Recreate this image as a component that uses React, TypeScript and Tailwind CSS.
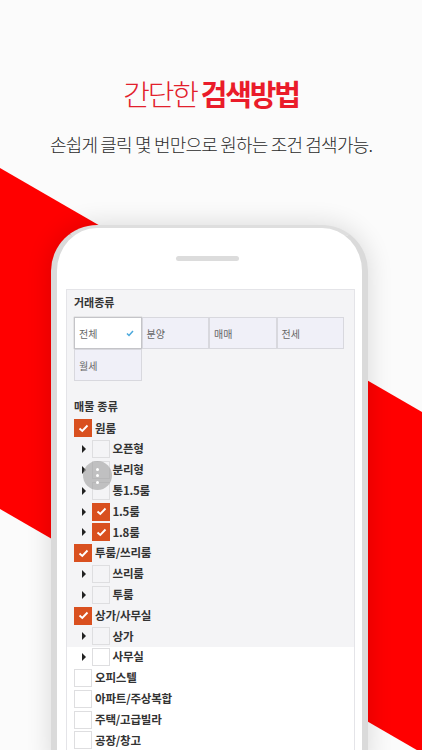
const font = { fontFamily: '"Noto Sans CJK KR", "Noto Sans", sans-serif' };

function Box({ checked }: { checked?: boolean }) {
  return (
    <span
      className={`flex h-[18px] w-[18px] shrink-0 items-center justify-center border ${
        checked ? "border-[#d9501f] bg-[#d9501f]" : "border-[#dedee0]"
      }`}
    >
      {checked && (
        <svg width="11" height="9" viewBox="0 0 11 9" fill="none">
          <path d="M1.5 4.5 L4.3 7 L9.5 1.5" stroke="#fff" strokeWidth="1.9" />
        </svg>
      )}
    </span>
  );
}

function Row({ label, checked, child }: { label: string; checked?: boolean; child?: boolean }) {
  return (
    <div className={`flex h-[20.8px] items-center ${child ? "pl-[7px]" : ""}`}>
      {child && (
        <svg width="4" height="8" viewBox="0 0 4 8" className="mr-[6px] ml-px shrink-0">
          <path d="M0 0 L4 4 L0 8 Z" fill="#222" />
        </svg>
      )}
      <Box checked={checked} />
      <span className={`${child ? "ml-[2.5px]" : "ml-[3px]"} text-[11.5px] leading-none font-bold tracking-[-0.2px] text-[#333]`}>
        {label}
      </span>
    </div>
  );
}

function Tab({ label, active }: { label: string; active?: boolean }) {
  return (
    <div
      className={`flex h-[32px] w-[67.5px] items-center justify-between border px-[4px] text-[10px] text-[#666] ${
        active ? "border-[#c4c4c8] bg-white shadow-[0_0_1px_#999]" : "border-[#d8d8de] bg-[#f0f0f8]"
      }`}
    >
      <span>{label}</span>
      {active && (
        <svg width="8" height="7" viewBox="0 0 8 7" fill="none" className="mr-[3px]">
          <path d="M1 3.5 L3 5.5 L7 1" stroke="#4aa8dc" strokeWidth="1.5" />
        </svg>
      )}
    </div>
  );
}

export default function App() {
  return (
    <div style={font} className="relative h-[750px] w-[422px] overflow-hidden bg-[#fbfbfb]">
      <svg className="absolute inset-0" width="422" height="750" viewBox="0 0 422 750">
        <polygon points="0,168 422,412 422,753 0,509" fill="#ff0000" />
      </svg>

      <div className="relative flex flex-col items-center">
        <h1 className="mt-[71px] h-[44px] text-[29px] leading-[44px] font-light tracking-[-2.2px] text-[#e2202c]">
          간단한 <span className="font-bold text-[#ea1c2a]">검색방법</span>
        </h1>
        <p className="mt-[17px] h-[24px] text-[18px] leading-[24px] font-light tracking-[-0.8px] text-[#2a2a2a]">
          손쉽게 클릭 몇 번만으로 원하는 조건 검색가능.
        </p>
      </div>

      <div className="relative mt-[69px] ml-[51px] h-[540px] w-[317px] rounded-t-[46px] border-x-[6px] border-t-[3px] border-x-[#dadada] border-t-[#dedede] bg-white pl-[9px] shadow-[0_0_26px_rgba(0,0,0,0.14)]">
        <div className="mt-[28px] ml-[110px] h-[5px] w-[63px] rounded-full bg-[#dcdcdc]" />
        <div className="mt-[28px] w-[289px] border-x border-t border-[#e4e4e8]">
          <div className="bg-[#f4f4f6] pt-[4px] pl-[7px]">
            <div className="h-[23px] text-[11px] leading-[16px] font-bold text-[#333]">거래종류</div>
            <div className="flex flex-wrap">
              <Tab label="전체" active />
              <Tab label="분양" />
              <Tab label="매매" />
              <Tab label="전세" />
              <Tab label="월세" />
            </div>
            <div className="mt-[16px] h-[21px] text-[11px] leading-[18px] font-bold tracking-[0.2px] text-[#333]">
              매물 종류
            </div>
            <Row label="원룸" checked />
            <Row label="오픈형" child />
            <Row label="분리형" child />
            <Row label="통1.5룸" child />
            <Row label="1.5룸" checked child />
            <Row label="1.8룸" checked child />
            <Row label="투룸/쓰리룸" checked />
            <Row label="쓰리룸" child />
            <Row label="투룸" child />
            <Row label="상가/사무실" checked />
            <Row label="상가" child />
          </div>
          <div className="pl-[7px]">
            <Row label="사무실" child />
            <Row label="오피스텔" />
            <Row label="아파트/주상복합" />
            <Row label="주택/고급빌라" />
            <Row label="공장/창고" />
          </div>
        </div>
        <div className="absolute top-[233px] left-[26px] flex h-[29px] w-[29px] flex-col items-center justify-center gap-[3.5px] rounded-full bg-[rgba(160,160,160,0.62)]">
          <span className="h-[3px] w-[3px] rounded-full bg-white" />
          <span className="h-[3px] w-[3px] rounded-full bg-white" />
          <span className="h-[3px] w-[3px] rounded-full bg-white" />
        </div>
      </div>
    </div>
  );
}
